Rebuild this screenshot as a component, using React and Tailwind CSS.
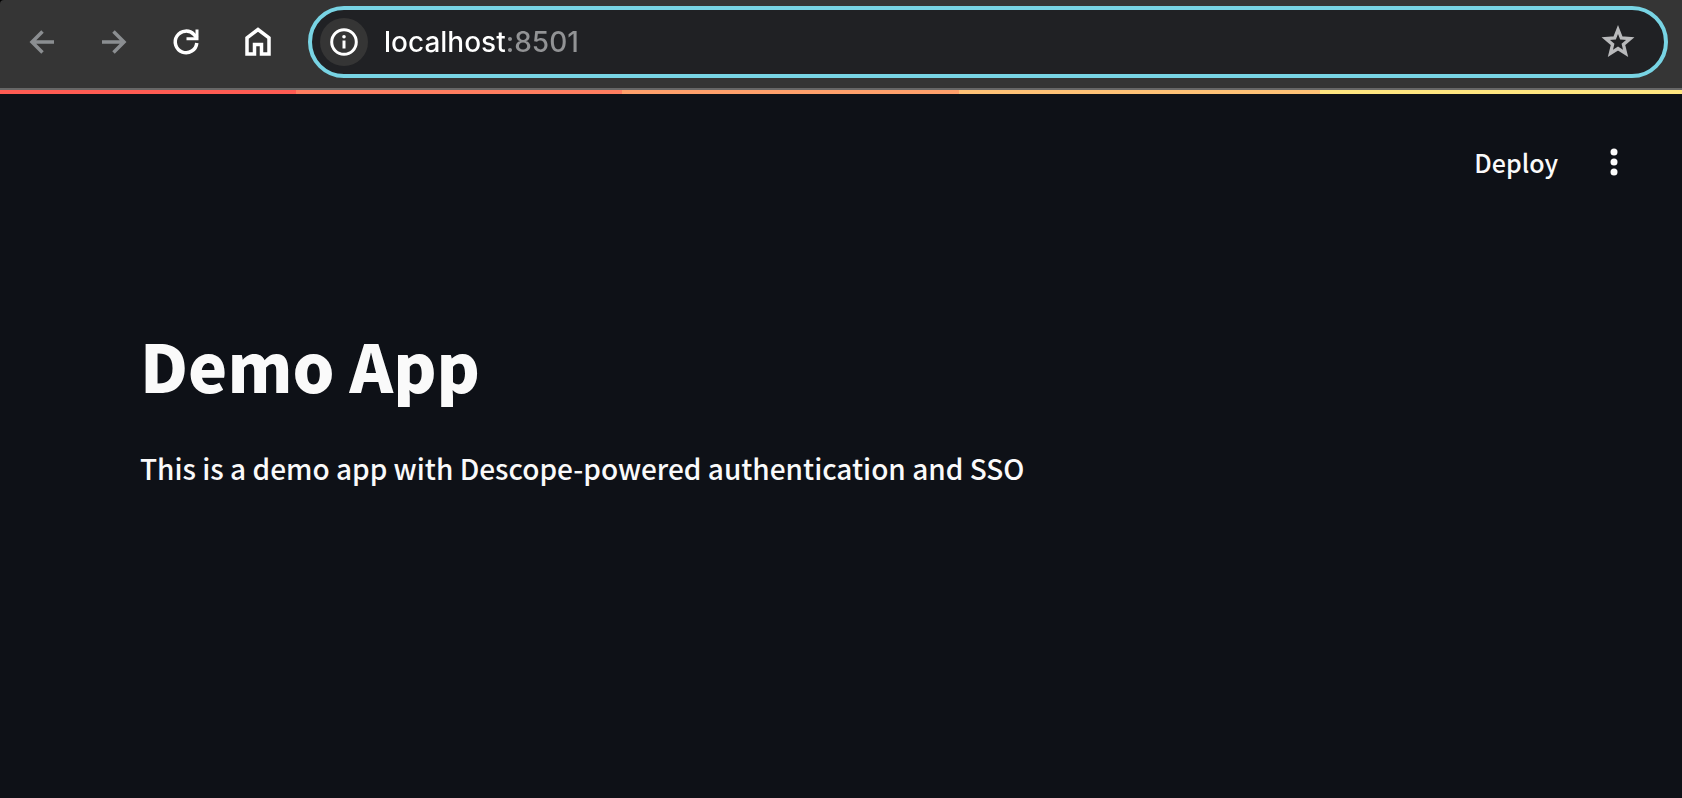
import React from 'react';

const ICONS = {
  back: <path d="M30 18H8M18.5 7.5L8 18l10.5 10.5" stroke="#8b8e91" strokeWidth="3.5" />,
  forward: <path d="M6 18h22M17.500 7.500L28 18 17.500 28.500" stroke="#8b8e91" strokeWidth="3.5" />,
  reload: (
    <>
      <path d="M28.800 19a10.800 10.800 0 1 1-2.700-8.300L29 14" stroke="#fff" strokeWidth="3.5" />
      <path d="M29 5.500v9.200h-10.500" stroke="#fff" strokeWidth="3" />
    </>
  ),
  home: (
    <path
      d="M7 30V13.800L18 5.500l11 8.300V30h-7.500V20.500h-7V30z"
      stroke="#fff"
      strokeWidth="3.5"
    />
  ),
};

const NAV = [
  { icon: 'back', label: 'Back' },
  { icon: 'forward', label: 'Forward' },
  { icon: 'reload', label: 'Reload' },
  { icon: 'home', label: 'Home' },
];

function NavButton({ icon, label }) {
  return (
    <button type="button" aria-label={label}>
      <svg className="size-9" viewBox="0 0 36 36" fill="none">
        {ICONS[icon]}
      </svg>
    </button>
  );
}

function AddressBar() {
  return (
    <div className="flex h-[72px] min-w-0 flex-1 items-center rounded-full border-4 border-[#78d4e4] bg-[#202124] pr-7 pl-2">
      <button
        type="button"
        aria-label="Site information"
        className="flex size-12 shrink-0 items-center justify-center rounded-full bg-[#353535]"
      >
        <svg className="size-7" viewBox="0 0 28 28" fill="none">
          <circle cx="14" cy="14" r="12.3" stroke="#fff" strokeWidth="3" />
          <circle cx="14" cy="8.700" r="1.800" fill="#fff" />
          <path d="M14 12.500v8" stroke="#fff" strokeWidth="3" />
        </svg>
      </button>
      {/* hard-stop gradient dims the port after the host name */}
      <input
        type="text"
        aria-label="Address"
        defaultValue="localhost:8501"
        className="ml-4 min-w-0 flex-1 bg-[linear-gradient(to_right,#fff_121px,#929395_121px)] bg-clip-text font-['Inter',sans-serif] text-[28px] leading-9 font-medium text-transparent outline-none"
      />
      <button type="button" aria-label="Bookmark this page">
        <svg className="size-9" viewBox="0 0 36 36" fill="none">
          <path
            d="M18 5.500l3.300 8.400 9 .7-6.900 5.800 2.200 8.900L18 24.500l-7.600 4.800 2.200-8.900-6.900-5.800 9-.7z"
            stroke="#b8b9bb"
            strokeWidth="3.300"
          />
        </svg>
      </button>
    </div>
  );
}

function BrowserBar() {
  return (
    <div className="bg-black">
      <div className="flex items-center gap-8 rounded-tl-[4px] border-b-2 border-[#676767] bg-[#353535] pt-1.5 pr-3.5 pb-2.5 pl-6">
        <nav className="flex items-center gap-9">
          {NAV.map((item) => (
            <NavButton key={item.icon} {...item} />
          ))}
        </nav>
        <AddressBar />
      </div>
    </div>
  );
}

export default function App() {
  return (
    <div className="min-h-screen bg-[#0e1117] font-['Noto_Sans_CJK_SC','Source_Sans_Pro',sans-serif] text-[#fafafa]">
      <BrowserBar />
      <div className="h-1 bg-[linear-gradient(to_right,#ff5c53_17.6%,#ff7e60_17.6%_37%,#ffa06b_37%_57%,#ffc276_57%_78.500%,#ffe680_78.500%)]" />
      <header className="flex items-center justify-end gap-[38px] pt-[50px] pr-[50px]">
        <button type="button" className="text-[25px] leading-9 font-medium">
          Deploy
        </button>
        <button type="button" aria-label="Main menu">
          <svg className="size-9" viewBox="0 0 36 36" fill="currentColor">
            <circle cx="18" cy="8" r="3.500" />
            <circle cx="18" cy="18" r="3.500" />
            <circle cx="18" cy="28" r="3.500" />
          </svg>
        </button>
      </header>
      <main className="px-[140px] pt-[138px]">
        <h1 className="text-[66px] leading-[92px] font-black">Demo App</h1>
        <p className="mt-[34px] text-[28px] leading-12 font-medium">
          This is a demo app with Descope-powered authentication and SSO
        </p>
      </main>
    </div>
  );
}
